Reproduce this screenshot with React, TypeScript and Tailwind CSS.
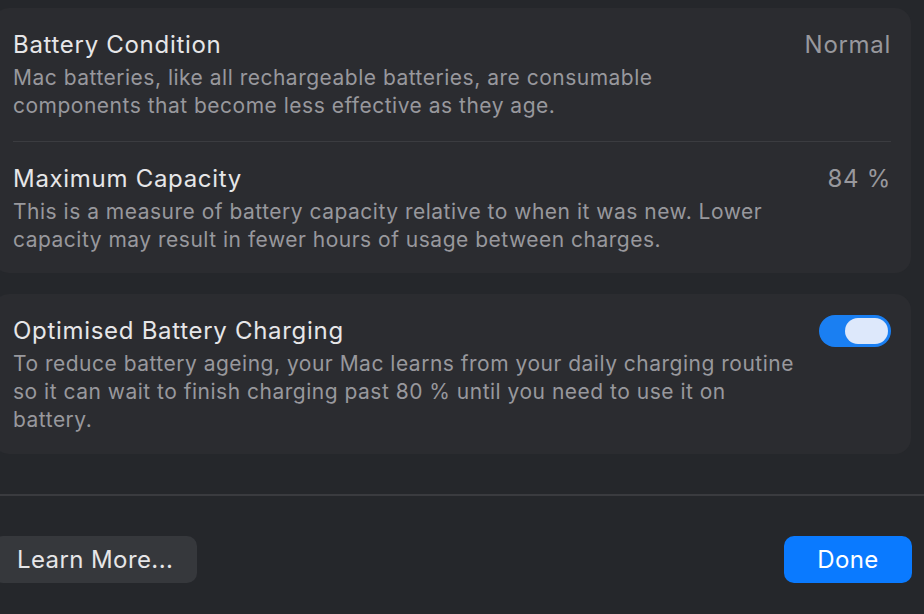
import { useState } from 'react';

interface RowProps {
  title: string;
  description: string;
  value?: string;
  divider?: boolean;
}

function Row({ title, description, value, divider }: RowProps) {
  return (
    <div className={divider ? 'border-t border-[#3b3c40] pt-[22px]' : ''}>
      <div className="flex items-start justify-between">
        <div className="min-w-0">
          <div className="text-[24px] leading-[30px] tracking-[0.7px] text-[#e6e6e8]">{title}</div>
          <p className="mt-1 w-[766px] text-[21px] leading-[28px] tracking-[0.5px] text-[#98989d]">
            {description}
          </p>
        </div>
        {value && (
          <div className="shrink-0 text-[24px] leading-[30px] tracking-[0.7px] text-[#98989d]">{value}</div>
        )}
      </div>
    </div>
  );
}

function Toggle({ on, onChange }: { on: boolean; onChange: () => void }) {
  return (
    <button
      onClick={onChange}
      className={`mt-[-1px] flex h-8 w-[72px] shrink-0 items-center rounded-full p-[3px] ${
        on ? 'justify-end bg-[#1a7ff2]' : 'justify-start bg-[#3a3b3f]'
      }`}
    >
      <span className="h-[26px] w-[43px] rounded-full bg-[#dde8fb]" />
    </button>
  );
}

export default function App() {
  const [optimised, setOptimised] = useState(true);

  return (
    <div
      className="h-[614px] w-[924px] overflow-hidden bg-[#25272b] pt-2"
      style={{ fontFamily: 'Inter, "Noto Sans", sans-serif' }}
    >
      {/* Battery health card */}
      <div className="ml-[-7px] w-[918px] rounded-2xl bg-[#2b2c30] px-5 pt-[22px] pb-[19px]">
        <div className="pb-[21px]">
          <Row
            title="Battery Condition"
            value="Normal"
            description="Mac batteries, like all rechargeable batteries, are consumable components that become less effective as they age."
          />
        </div>
        <Row
          divider
          title="Maximum Capacity"
          value="84 %"
          description="This is a measure of battery capacity relative to when it was new. Lower capacity may result in fewer hours of usage between charges."
        />
      </div>

      {/* Optimised charging card */}
      <div className="mt-[21px] ml-[-7px] w-[918px] rounded-2xl bg-[#2b2c30] px-5 pt-[22px] pb-5">
        <div className="flex items-start justify-between">
          <div className="w-[796px]">
            <div className="text-[24px] leading-[30px] tracking-[0.7px] text-[#e6e6e8]">
              Optimised Battery Charging
            </div>
            <p className="mt-1 text-[21px] leading-[28px] tracking-[0.5px] text-[#98989d]">
              To reduce battery ageing, your Mac learns from your daily charging routine so it can wait to finish charging past 80 % until you need to use it on battery.
            </p>
          </div>
          <Toggle on={optimised} onChange={() => setOptimised(!optimised)} />
        </div>
      </div>

      <div className="mt-10 h-[2px] bg-[#3a3b3f]" />

      {/* Footer buttons */}
      <div className="mt-10 flex items-center justify-between pr-3">
        <button className="ml-[-7px] h-[47px] rounded-[10px] bg-[#36383c] px-6 text-[24px] tracking-[0.4px] text-[#e6e6e8]">
          Learn More...
        </button>
        <button className="h-[47px] w-32 rounded-[10px] bg-[#0a7aff] text-[24px] tracking-[0.4px] text-white">
          Done
        </button>
      </div>
    </div>
  );
}
